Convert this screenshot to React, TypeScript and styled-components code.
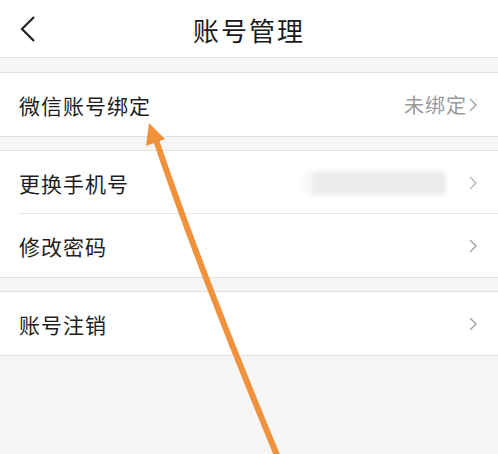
import React from "react";
import styled, { createGlobalStyle } from "styled-components";

const Global = createGlobalStyle`
  html, body { margin: 0; padding: 0; background: #f6f6f6; }
  body { font-family: "Noto Sans CJK SC", "Noto Sans", sans-serif; }
`;

const Page = styled.div`
  position: relative;
  width: 498px;
  height: 454px;
  overflow: hidden;
  background: #f6f6f6;
`;

const Header = styled.header`
  height: 57px;
  background: #fff;
  border-bottom: 1px solid #e2e2e2;
  display: grid;
  grid-template-columns: 60px 1fr 60px;
  align-items: center;
`;

const Back = styled.div`
  display: flex;
  justify-content: center;
  padding-right: 4px;
`;

const Title = styled.h1`
  margin: 0;
  text-align: center;
  font-size: 26px;
  font-weight: 400;
  color: #1a1a1a;
  letter-spacing: 2px;
  line-height: 1;
  padding-top: 2px;
`;

const Group = styled.section<{ $first?: boolean }>`
  margin-top: ${(p) => (p.$first ? 14 : 13)}px;
  background: #fff;
  border-top: 1px solid #e0e0e0;
  border-bottom: 1px solid #e0e0e0;
`;

const Row = styled.div<{ $divider?: boolean }>`
  height: 63px;
  display: flex;
  align-items: center;
  padding: 0 20px 0 19px;
  position: relative;
  ${(p) =>
    p.$divider
      ? `&::after { content: ""; position: absolute; left: 18px; right: 0; bottom: 0; height: 1px; background: #e6e6e6; }`
      : ""}
`;

const Label = styled.span`
  font-size: 21px;
  color: #1e1e1e;
  letter-spacing: 1px;
  flex: 1;
`;

const Value = styled.span`
  font-size: 20px;
  color: #9a9a9a;
  letter-spacing: 1px;
  margin-right: 1px;
`;

const Blur = styled.div`
  width: 145px;
  height: 24px;
  margin-right: 22px;
  background: linear-gradient(90deg, rgba(238,238,238,0) 0%, #ececec 12%, #ececec 100%);
  border-radius: 3px;
  filter: blur(2px);
`;

const Overlay = styled.svg`
  position: absolute;
  left: 0;
  top: 0;
  pointer-events: none;
`;

const Chevron = ({ light }: { light?: boolean }) => (
  <svg width="10" height="18" viewBox="0 0 10 18">
    <path d="M2 3 L8 9 L2 15" fill="none" stroke={light ? "#bdbdbd" : "#a8a8a8"} strokeWidth="1.5" />
  </svg>
);

export default function App() {
  return (
    <Page>
      <Global />
      <Header>
        <Back>
          <svg width="18" height="28" viewBox="0 0 18 28">
            <path d="M15 2 L3 14 L15 26" fill="none" stroke="#222" strokeWidth="2.2" />
          </svg>
        </Back>
        <Title>账号管理</Title>
        <div />
      </Header>
      <Group $first>
        <Row>
          <Label>微信账号绑定</Label>
          <Value>未绑定</Value>
          <Chevron />
        </Row>
      </Group>
      <Group>
        <Row $divider>
          <Label>更换手机号</Label>
          <Blur />
          <Chevron light />
        </Row>
        <Row>
          <Label>修改密码</Label>
          <Chevron />
        </Row>
      </Group>
      <Group>
        <Row>
          <Label>账号注销</Label>
          <Chevron />
        </Row>
      </Group>
      <Overlay width="498" height="454" viewBox="0 0 498 454">
        <path d="M279 460 Q 200 270 156 140" fill="none" stroke="#f0913c" strokeWidth="6" />
        <polygon points="149,123 165,139 146,146" fill="#f0913c" />
      </Overlay>
    </Page>
  );
}
